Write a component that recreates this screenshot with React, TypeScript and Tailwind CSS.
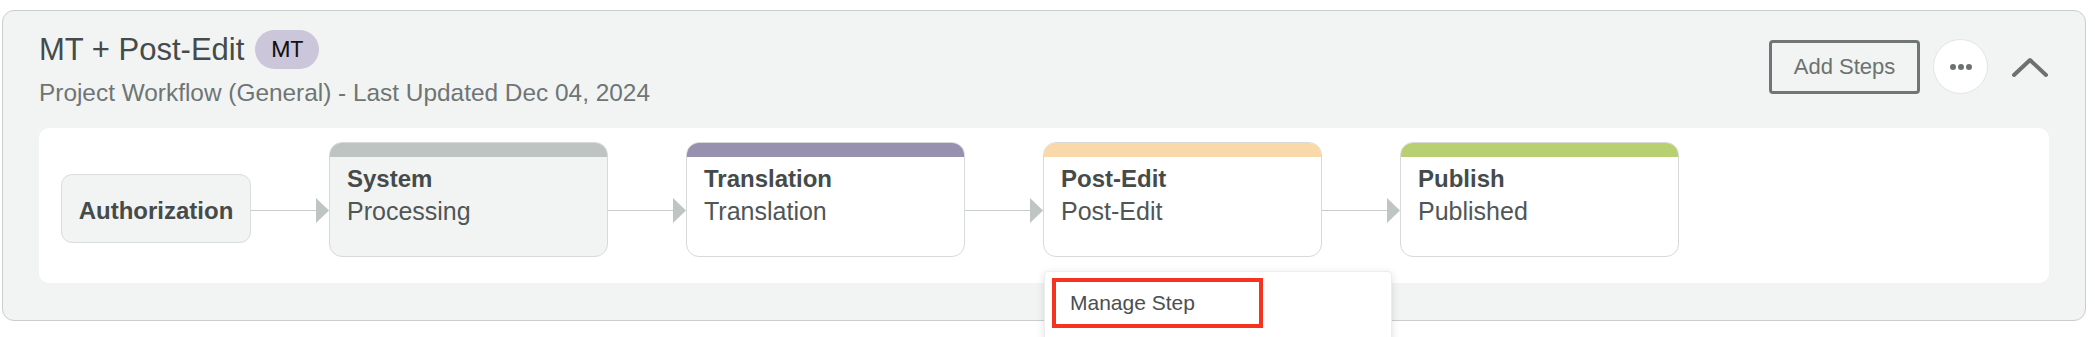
import { ReactNode } from "react";

const font = { fontFamily: '"Liberation Sans", Arial, sans-serif' };

const steps = [
  { title: "System", sub: "Processing", bar: "bg-[#bec4c2]", body: "bg-[#f2f4f3]", menu: false },
  { title: "Translation", sub: "Translation", bar: "bg-[#9790ae]", body: "bg-white", menu: false },
  { title: "Post-Edit", sub: "Post-Edit", bar: "bg-[#f9d9aa]", body: "bg-white", menu: true },
  { title: "Publish", sub: "Published", bar: "bg-[#b9d072]", body: "bg-white", menu: false },
];

function Arrow() {
  return (
    <div className="mt-[56px] flex h-[25px] w-[78px] shrink-0 items-center">
      <div className="h-px flex-1 bg-[#c8cdcb]" />
      <svg width="13" height="25" viewBox="0 0 13 25" className="shrink-0">
        <polygon points="0,0 13,12.5 0,25" fill="#bfc5c3" />
      </svg>
    </div>
  );
}

function StepMenu() {
  return (
    <div className="absolute left-[1px] top-[calc(100%+14px)] z-10 h-[100px] w-[348px] rounded-[4px] border border-[#eceeed] bg-white pl-[7px] pt-[6px] shadow-[0_2px_8px_rgba(0,0,0,0.12)]">
      <div className="flex h-[50px] w-[211px] items-center border-[4px] border-[#f5331f] pl-[14px] text-[21px] text-[#4a5050]">
        Manage Step
      </div>
    </div>
  );
}

function StepCard({ title, sub, bar, body, children }: { title: string; sub: string; bar: string; body: string; children?: ReactNode }) {
  return (
    <div className="relative shrink-0">
      <div className={`h-[115px] w-[279px] overflow-hidden rounded-[13px] border border-[#d6dad9] ${body}`}>
        <div className={`h-[14px] ${bar}`} />
        <div className="px-[17px] pt-[6px] leading-[32px]">
          <div className="text-[24px] font-bold text-[#454b4a]">{title}</div>
          <div className="text-[25px] text-[#4f5655]">{sub}</div>
        </div>
      </div>
      {children}
    </div>
  );
}

export default function App() {
  return (
    <div className="h-[337px] overflow-hidden bg-white pl-[2px] pt-[10px]" style={font}>
      <div className="w-[2084px] rounded-[12px] border border-[#c9cecc] bg-[#f2f4f3] pb-[37px] pl-[36px] pr-[36px] pt-[19px]">
        <div className="flex items-start justify-between">
          <div>
            <div className="flex h-[39px] items-center gap-[11px]">
              <h1 className="text-[31px] leading-[36px] text-[#454b4a]">MT + Post-Edit</h1>
              <span
                className="flex h-[39px] items-center rounded-full bg-[#cbc6d9] px-[16px] text-[22px] text-[#111]"
                style={{ fontFamily: "Roboto, sans-serif" }}
              >
                MT
              </span>
            </div>
            <p className="mt-[8px] text-[24.4px] leading-[32px] text-[#6e7574]">
              Project Workflow (General) - Last Updated Dec 04, 2024
            </p>
          </div>

          <div className="mt-[9px] flex items-center">
            <button className="h-[54px] w-[151px] rounded-[4px] border-[3px] border-[#6f7675] text-[22px] text-[#6b7270]">
              Add Steps
            </button>
            <button className="ml-[13px] flex h-[55px] w-[55px] items-center justify-center gap-[2px] rounded-full border border-[#e2e5e4] bg-white">
              <span className="h-[6px] w-[6px] rounded-full bg-[#6b7270]" />
              <span className="h-[6px] w-[6px] rounded-full bg-[#6b7270]" />
              <span className="h-[6px] w-[6px] rounded-full bg-[#6b7270]" />
            </button>
            <svg width="38" height="22" viewBox="0 0 38 22" className="ml-[23px]">
              <polyline points="3,19 19,4 35,19" fill="none" stroke="#6b7270" strokeWidth="4" strokeLinecap="round" strokeLinejoin="round" />
            </svg>
          </div>
        </div>

        <div className="mt-[19px] flex items-start rounded-[10px] bg-white pb-[26px] pl-[22px] pt-[14px]">
          <div className="mt-[32px] flex h-[69px] w-[190px] shrink-0 items-center justify-center rounded-[11px] border border-[#d9dddb] bg-[#f2f4f3] pt-[4px] text-[24px] font-bold text-[#454b4a]">
            Authorization
          </div>
          {steps.map((s) => (
            <div key={s.title} className="flex items-start">
              <Arrow />
              <StepCard title={s.title} sub={s.sub} bar={s.bar} body={s.body}>
                {s.menu && <StepMenu />}
              </StepCard>
            </div>
          ))}
        </div>
      </div>
    </div>
  );
}
